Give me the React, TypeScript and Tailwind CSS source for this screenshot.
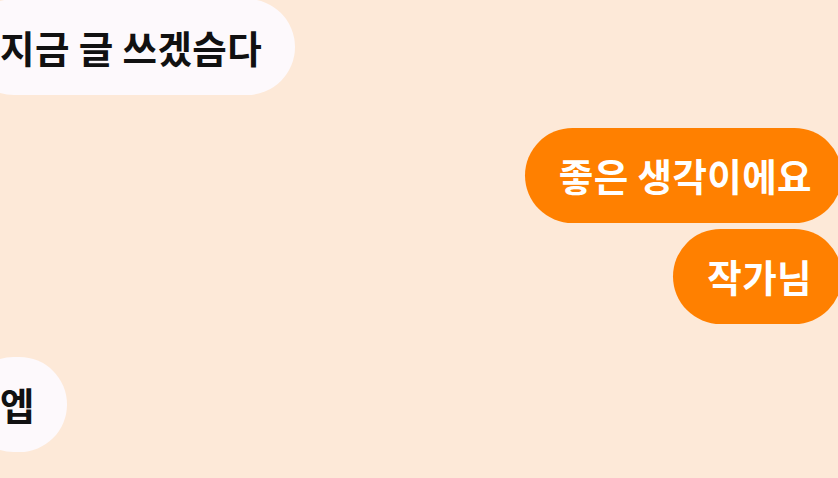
import React from "react";

const font = { fontFamily: '"Noto Sans CJK KR", "Noto Sans", sans-serif' };

export default function App() {
  return (
    <div
      className="w-[838px] h-[478px] overflow-hidden bg-[#fde9d8] flex flex-col font-bold text-[37.5px] tracking-[0.4px]"
      style={font}
    >
      <div className="flex justify-start mt-[-1px]">
        <div className="h-[96px] -ml-[34px] pl-[34px] pr-[33px] rounded-full bg-[#fdf9fc] text-[#111] flex items-center">
          지금 글 쓰겠슴다
        </div>
      </div>
      <div className="flex flex-col items-end gap-[6px] mt-[33px]">
        <div className="h-[95px] -mr-[4px] pl-[34px] pr-[30px] rounded-full bg-[#ff8000] text-white flex items-center">
          좋은 생각이에요
        </div>
        <div className="h-[95px] -mr-[4px] pl-[34px] pr-[30px] rounded-full bg-[#ff8000] text-white flex items-center">
          작가님
        </div>
      </div>
      <div className="flex justify-start mt-[33px]">
        <div className="h-[95px] -ml-[34px] pl-[34px] pr-[32px] rounded-full bg-[#fdf9fc] text-[#111] flex items-center">
          엡
        </div>
      </div>
    </div>
  );
}
